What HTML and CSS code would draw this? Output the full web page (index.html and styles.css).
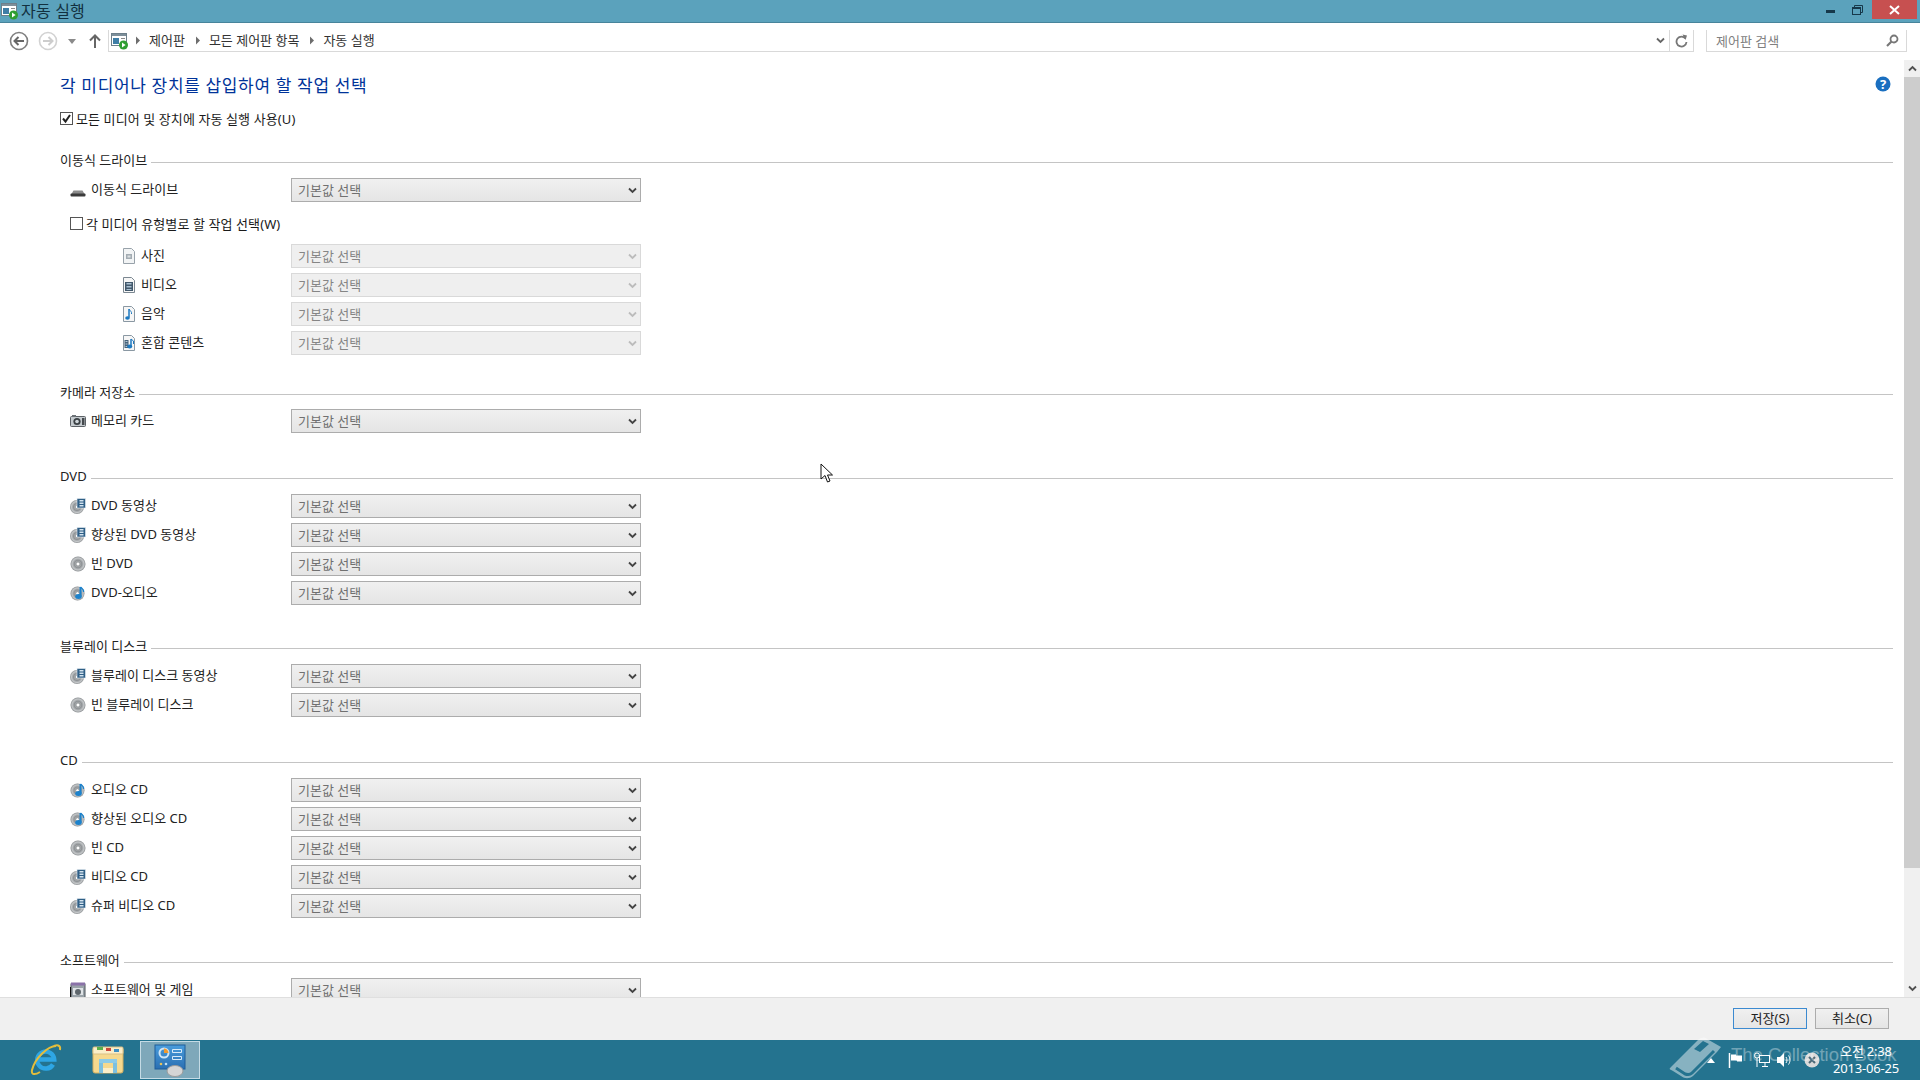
FILE: index.html
```html
<!DOCTYPE html>
<html lang="ko">
<head>
  <meta charset="UTF-8" />
  <title>자동 실행</title>
  <link rel="stylesheet" href="styles.css">
</head>
<body>
  <svg class="defs" width="0" height="0">
    <defs>
      <radialGradient id="discGrad" cx="50%" cy="50%" r="55%">
        <stop offset="0" stop-color="#e4e4e4"/>
        <stop offset="0.45" stop-color="#8e9295"/>
        <stop offset="0.72" stop-color="#c4c7c9"/>
        <stop offset="1" stop-color="#6f7376"/>
      </radialGradient>
      <linearGradient id="cpGrad" x1="0" y1="0" x2="0" y2="1">
        <stop offset="0" stop-color="#4a9ddc"/>
        <stop offset="1" stop-color="#2a6fb2"/>
      </linearGradient>
      <symbol id="i-autoplay" viewBox="0 0 18 18">
        <rect x="0.5" y="1.5" width="15" height="12" fill="#fff" stroke="#6d7f8a"/>
        <rect x="1" y="2" width="14" height="2" fill="#7d8f9a"/>
        <rect x="2" y="6" width="6" height="6" fill="#3f7ea6"/>
        <rect x="10" y="6" width="4" height="1" fill="#888"/>
        <circle cx="12.5" cy="13" r="4.5" fill="#2f9e32"/>
        <path d="M11 10.5l3.6 2.5-3.6 2.5z" fill="#fff"/>
      </symbol>
      <symbol id="i-drive" viewBox="0 0 16 16">
        <path d="M1.5 12l2-3.5h9l2 3.5z" fill="#8c8c8c"/>
        <rect x="0.5" y="11.5" width="15" height="3" rx="1" fill="#3b3b3b"/>
      </symbol>
      <symbol id="i-photo" viewBox="0 0 16 16">
        <path d="M2.5 0.5h8l3 3v12h-11z" fill="#f2f4f5" stroke="#98a2aa"/>
        <rect x="5" y="6" width="6" height="5" fill="#a3acb3"/>
        <rect x="6.5" y="7.5" width="3" height="2" fill="#dde1e4"/>
      </symbol>
      <symbol id="i-video" viewBox="0 0 16 16">
        <path d="M2.5 0.5h8l3 3v12h-11z" fill="#f6f6f6" stroke="#7b8791"/>
        <rect x="4" y="5" width="8" height="9" fill="#42586b"/>
        <path d="M5.5 6h5v1.5h-5zM5.5 9h5v1.5h-5zM5.5 12h5v1h-5z" fill="#a9c0d2"/>
      </symbol>
      <symbol id="i-music" viewBox="0 0 16 16">
        <path d="M2.5 0.5h8l3 3v12h-11z" fill="#f6f6f6" stroke="#8a98a3"/>
        <path d="M8 3v8.5" stroke="#1c79c0" stroke-width="1.5"/>
        <path d="M8 3c1 2 3 2.500 2.500 5" stroke="#1c79c0" fill="none"/>
        <ellipse cx="6.500" cy="12" rx="2.300" ry="1.800" fill="#1c79c0"/>
      </symbol>
      <symbol id="i-mixed" viewBox="0 0 16 16">
        <path d="M2.500 0.500h8l3 3v12h-11z" fill="#f6f6f6" stroke="#8a98a3"/>
        <rect x="3.500" y="5" width="4" height="8" fill="#46627a"/>
        <path d="M4.500 6h2v1h-2zM4.500 8.500h2v1h-2zM4.500 11h2v1h-2z" fill="#b6c8d6"/>
        <path d="M10 4v7" stroke="#1c79c0" stroke-width="1.500"/>
        <ellipse cx="8.700" cy="11.500" rx="2.500" ry="2" fill="#1c79c0"/>
        <path d="M10 4l2.500 2v3" stroke="#1c79c0" fill="none"/>
      </symbol>
      <symbol id="i-camera" viewBox="0 0 16 16">
        <rect x="0.500" y="3.500" width="15" height="10" rx="1" fill="#c4cace" stroke="#5c6166"/>
        <rect x="2" y="2" width="4" height="2" fill="#6d7378"/>
        <circle cx="7" cy="8.500" r="3.600" fill="#3b4145"/>
        <circle cx="7" cy="8.500" r="1.800" fill="#cfd6db"/>
        <rect x="12" y="5" width="2.500" height="7" fill="#44494d"/>
      </symbol>
      <symbol id="i-disc" viewBox="0 0 16 16">
        <circle cx="8" cy="8" r="7.500" fill="url(#discGrad)"/>
        <circle cx="8" cy="8" r="2" fill="#fff" stroke="#7a7e81" stroke-width="0.700"/>
      </symbol>
      <symbol id="i-disc-video" viewBox="0 0 16 16">
        <circle cx="7" cy="9" r="7" fill="url(#discGrad)"/>
        <circle cx="7" cy="9" r="1.800" fill="#fff" stroke="#7a7e81" stroke-width="0.700"/>
        <rect x="7" y="0.500" width="8.500" height="9.500" fill="#2f5f86" stroke="#e8eef3" stroke-width="0.600"/>
        <path d="M9.500 2h4v1.500h-4zM9.500 4.500h4V6h-4zM9.500 7h4v1.500h-4z" fill="#d3e3ef"/>
      </symbol>
      <symbol id="i-disc-audio" viewBox="0 0 16 16">
        <circle cx="7.500" cy="8.500" r="7" fill="url(#discGrad)"/>
        <circle cx="7.500" cy="8.500" r="1.800" fill="#fff" stroke="#7a7e81" stroke-width="0.700"/>
        <path d="M10.500 2v9" stroke="#1c82cc" stroke-width="2"/>
        <ellipse cx="8.500" cy="11.500" rx="3.300" ry="2.500" fill="#1c82cc"/>
        <path d="M10.500 2c1.500 1.500 3.500 2 3 5" stroke="#1c82cc" stroke-width="1.300" fill="none"/>
      </symbol>
      <symbol id="i-software" viewBox="0 0 16 16">
        <rect x="1" y="2" width="14" height="14" fill="#9aa3a9" stroke="#4e555a"/>
        <rect x="1" y="0.500" width="14" height="3" fill="#8a72a8"/>
        <rect x="3" y="6" width="10" height="7" fill="#dfe3e6"/>
        <circle cx="8" cy="10" r="3" fill="#5e666c"/>
        <path d="M0.500 5v11" stroke="#111" stroke-width="1"/>
      </symbol>
      <symbol id="i-chevron" viewBox="0 0 9 7">
        <path d="M1 1.500l3.500 3.500L8 1.500" fill="none" stroke="currentColor" stroke-width="1.800"/>
      </symbol>
      <symbol id="i-crumb" viewBox="0 0 6 9">
        <path d="M1 0.500l4 4-4 4z" fill="#6d6d6d"/>
      </symbol>
    </defs>
  </svg>

  <header class="titlebar">
    <svg class="title-icon"><use href="#i-autoplay"/></svg>
    <span class="title-text">자동 실행</span>
    <div class="window-btns">
      <svg class="win-min" width="9" height="3"><rect width="9" height="3" fill="#16384a"/></svg>
      <svg class="win-restore" width="11" height="10" viewBox="0 0 11 10"><path d="M2.500 2.500v-2h8v7h-2" fill="none" stroke="#16384a"/><rect x="0.500" y="2.500" width="8" height="7" fill="none" stroke="#16384a"/><rect x="0" y="2" width="9" height="2" fill="#16384a"/></svg>
      <div class="win-close">
        <svg width="11" height="10" viewBox="0 0 11 10"><path d="M1 1l9 8M10 1l-9 8" stroke="#fff" stroke-width="2"/></svg>
      </div>
    </div>
  </header>

  <nav class="addressbar">
    <div class="nav-btns">
      <svg class="nav-back" width="20" height="20" viewBox="0 0 20 20"><circle cx="10" cy="10" r="8.500" fill="#fff" stroke="#7f7f7f" stroke-width="1.600"/><path d="M15 10H6M9.500 6l-4 4 4 4" fill="none" stroke="#666" stroke-width="2"/></svg>
      <svg class="nav-forward" width="20" height="20" viewBox="0 0 20 20"><circle cx="10" cy="10" r="8.500" fill="#fff" stroke="#d2d2d2" stroke-width="1.600"/><path d="M5 10h9M10.500 6l4 4-4 4" fill="none" stroke="#cdcdcd" stroke-width="2"/></svg>
      <svg class="nav-drop" width="8" height="5"><path d="M0 0h8L4 5z" fill="#8a8a8a"/></svg>
      <svg class="nav-up" width="12" height="14" viewBox="0 0 12 14"><path d="M6 14V2M1 6.500l5-5 5 5" fill="none" stroke="#666" stroke-width="2"/></svg>
    </div>
    <div class="address-box">
      <svg class="addr-icon"><use href="#i-autoplay"/></svg>
      <svg class="crumb-sep"><use href="#i-crumb"/></svg>
      <span class="crumb">제어판</span>
      <svg class="crumb-sep"><use href="#i-crumb"/></svg>
      <span class="crumb">모든 제어판 항목</span>
      <svg class="crumb-sep"><use href="#i-crumb"/></svg>
      <span class="crumb">자동 실행</span>
      <div class="addr-tools">
        <svg class="addr-chevron"><use href="#i-chevron"/></svg>
        <div class="addr-refresh">
          <svg width="13" height="14" viewBox="0 0 13 14"><path d="M10.500 4.500a5 5 0 1 0 1 3.500" fill="none" stroke="#777" stroke-width="1.800"/><path d="M7.500 0.500l4.500 1-1.500 4.500z" fill="#777"/></svg>
        </div>
      </div>
    </div>
    <div class="search-box">
      <span>제어판 검색</span>
      <svg width="13" height="13" viewBox="0 0 13 13"><circle cx="8" cy="5" r="3.500" fill="none" stroke="#777" stroke-width="1.800"/><path d="M5.500 7.500L1 12" stroke="#777" stroke-width="2.200"/></svg>
    </div>
  </nav>

  <div class="workspace">
    <main class="content">
      <svg class="help" width="16" height="16" viewBox="0 0 16 16"><circle cx="8" cy="8" r="7.500" fill="#1a6fc0"/><text x="8" y="12.500" text-anchor="middle" class="help-mark">?</text></svg>

      <h1>각 미디어나 장치를 삽입하여 할 작업 선택</h1>
      <label class="check-row master">
        <span class="check"><svg width="11" height="11" viewBox="0 0 11 11"><path d="M2 5.500l2.500 3L9 2" fill="none" stroke="#222" stroke-width="2"/></svg></span>
        모든 미디어 및 장치에 자동 실행 사용(U)
      </label>

      <section class="group first">
        <h2 class="group-title"><span>이동식 드라이브</span></h2>
        <div class="row"><div class="name"><svg class="ico"><use href="#i-drive"/></svg>이동식 드라이브</div><div class="combo">기본값 선택<svg><use href="#i-chevron"/></svg></div></div>
        <label class="check-row per-media"><span class="check"></span>각 미디어 유형별로 할 작업 선택(W)</label>
        <div class="row sub"><div class="name"><svg class="ico"><use href="#i-photo"/></svg>사진</div><div class="combo off">기본값 선택<svg><use href="#i-chevron"/></svg></div></div>
        <div class="row sub"><div class="name"><svg class="ico"><use href="#i-video"/></svg>비디오</div><div class="combo off">기본값 선택<svg><use href="#i-chevron"/></svg></div></div>
        <div class="row sub"><div class="name"><svg class="ico"><use href="#i-music"/></svg>음악</div><div class="combo off">기본값 선택<svg><use href="#i-chevron"/></svg></div></div>
        <div class="row sub"><div class="name"><svg class="ico"><use href="#i-mixed"/></svg>혼합 콘텐츠</div><div class="combo off">기본값 선택<svg><use href="#i-chevron"/></svg></div></div>
      </section>

      <section class="group camera">
        <h2 class="group-title"><span>카메라 저장소</span></h2>
        <div class="row"><div class="name"><svg class="ico"><use href="#i-camera"/></svg>메모리 카드</div><div class="combo">기본값 선택<svg><use href="#i-chevron"/></svg></div></div>
      </section>

      <section class="group dvd">
        <h2 class="group-title"><span>DVD</span></h2>
        <div class="row"><div class="name"><svg class="ico"><use href="#i-disc-video"/></svg>DVD 동영상</div><div class="combo">기본값 선택<svg><use href="#i-chevron"/></svg></div></div>
        <div class="row"><div class="name"><svg class="ico"><use href="#i-disc-video"/></svg>향상된 DVD 동영상</div><div class="combo">기본값 선택<svg><use href="#i-chevron"/></svg></div></div>
        <div class="row"><div class="name"><svg class="ico"><use href="#i-disc"/></svg>빈 DVD</div><div class="combo">기본값 선택<svg><use href="#i-chevron"/></svg></div></div>
        <div class="row"><div class="name"><svg class="ico"><use href="#i-disc-audio"/></svg>DVD-오디오</div><div class="combo">기본값 선택<svg><use href="#i-chevron"/></svg></div></div>
      </section>

      <section class="group">
        <h2 class="group-title"><span>블루레이 디스크</span></h2>
        <div class="row"><div class="name"><svg class="ico"><use href="#i-disc-video"/></svg>블루레이 디스크 동영상</div><div class="combo">기본값 선택<svg><use href="#i-chevron"/></svg></div></div>
        <div class="row"><div class="name"><svg class="ico"><use href="#i-disc"/></svg>빈 블루레이 디스크</div><div class="combo">기본값 선택<svg><use href="#i-chevron"/></svg></div></div>
      </section>

      <section class="group cd">
        <h2 class="group-title"><span>CD</span></h2>
        <div class="row"><div class="name"><svg class="ico"><use href="#i-disc-audio"/></svg>오디오 CD</div><div class="combo">기본값 선택<svg><use href="#i-chevron"/></svg></div></div>
        <div class="row"><div class="name"><svg class="ico"><use href="#i-disc-audio"/></svg>향상된 오디오 CD</div><div class="combo">기본값 선택<svg><use href="#i-chevron"/></svg></div></div>
        <div class="row"><div class="name"><svg class="ico"><use href="#i-disc"/></svg>빈 CD</div><div class="combo">기본값 선택<svg><use href="#i-chevron"/></svg></div></div>
        <div class="row"><div class="name"><svg class="ico"><use href="#i-disc-video"/></svg>비디오 CD</div><div class="combo">기본값 선택<svg><use href="#i-chevron"/></svg></div></div>
        <div class="row"><div class="name"><svg class="ico"><use href="#i-disc-video"/></svg>슈퍼 비디오 CD</div><div class="combo">기본값 선택<svg><use href="#i-chevron"/></svg></div></div>
      </section>

      <section class="group software">
        <h2 class="group-title"><span>소프트웨어</span></h2>
        <div class="row"><div class="name"><svg class="ico"><use href="#i-software"/></svg>소프트웨어 및 게임</div><div class="combo">기본값 선택<svg><use href="#i-chevron"/></svg></div></div>
      </section>
    </main>

    <aside class="scrollbar">
      <div class="sb-btn"><svg width="9" height="7"><use href="#i-chevron"/></svg></div>
      <div class="sb-track"><div class="sb-thumb"></div></div>
      <div class="sb-btn"><svg width="9" height="7"><use href="#i-chevron"/></svg></div>
    </aside>
  </div>

  <footer class="actions">
    <button class="btn primary">저장(S)</button>
    <button class="btn">취소(C)</button>
  </footer>

  <div class="taskbar">
    <div class="task">
      <svg width="34" height="34" viewBox="0 0 34 34">
        <path d="M24 21.500a8.500 8.500 0 1 1 1.200-5H10" fill="none" stroke="#2ea6e4" stroke-width="4.500"/>
        <path d="M27 3C19 3 6 15 3 27c-1 5 3 5 8 2M23 4c5-3 9-2 8 3" fill="none" stroke="#e3bd3c" stroke-width="2"/>
      </svg>
    </div>
    <div class="task">
      <svg width="34" height="30" viewBox="0 0 34 30">
        <path d="M2 4h30v22a2 2 0 0 1-2 2H4a2 2 0 0 1-2-2z" fill="#f6d98e" stroke="#cfae62"/>
        <rect x="2" y="2" width="30" height="7" rx="1" fill="#fbeec8" stroke="#d9c085"/>
        <rect x="6" y="2" width="6" height="3" fill="#5bb04a"/>
        <rect x="15" y="3" width="5" height="3" fill="#c9473a"/>
        <rect x="23" y="4" width="5" height="3" fill="#3d8fc4"/>
        <rect x="8" y="14" width="18" height="4" fill="#8ccbe8"/>
        <path d="M8 18h4v10H8zM22 18h4v10h-4z" fill="#7cc0e0"/>
        <rect x="12" y="23" width="10" height="5" fill="#fbeec8"/>
      </svg>
    </div>
    <div class="task active">
      <svg width="34" height="34" viewBox="0 0 34 34">
        <rect x="2" y="2" width="30" height="24" fill="url(#cpGrad)" stroke="#1f5d99"/>
        <circle cx="11" cy="10" r="4.500" fill="none" stroke="#cfe6f7" stroke-width="2"/>
        <path d="M11 5.500a4.500 4.500 0 0 1 4.500 4.500H11z" fill="#f09a2f"/>
        <path d="M19.500 6.500h9v3h-9zM19.500 13.500h9v3h-9z" fill="none" stroke="#d8ebf9"/>
        <circle cx="8" cy="21" r="1.300" fill="#e6c15a"/>
        <circle cx="13" cy="21" r="1.300" fill="#bfe0f5"/>
        <ellipse cx="22" cy="28" rx="8" ry="5.500" fill="#d5d5d5" stroke="#9b9b9b"/>
      </svg>
    </div>

    <div class="tray">
      <svg class="tray-up" width="8" height="5"><path d="M4 0l4 5H0z" fill="#fff"/></svg>
      <svg class="tray-flag" width="15" height="15" viewBox="0 0 15 15"><path d="M1.500 0v15" stroke="#fff" stroke-width="1.500"/><path d="M3 1.500h5v1h6v6H9V7.500H3z" fill="#fff"/></svg>
      <svg class="tray-net" width="17" height="16" viewBox="0 0 17 16"><rect x="6.500" y="3.500" width="10" height="7" fill="none" stroke="#fff"/><circle cx="4" cy="3.500" r="2.500" fill="none" stroke="#fff"/><path d="M4 6v9M9 14.500h6M12 11v3" stroke="#fff"/></svg>
      <svg class="tray-vol" width="16" height="16" viewBox="0 0 16 16"><path d="M1 5h3l4-4v14l-4-4H1z" fill="#fff"/><path d="M10 5c1.300 2 1.300 4 0 6M12.500 3.500c2 3 2 6 0 9" fill="none" stroke="#fff"/></svg>
      <svg class="tray-err" width="16" height="16" viewBox="0 0 16 16"><circle cx="8" cy="8" r="7.500" fill="#d9d9d9"/><path d="M5 5l6 6M11 5l-6 6" stroke="#4c6a78" stroke-width="2"/></svg>
      <div class="clock"><span>오전 2:38</span><span>2013-06-25</span></div>
    </div>
  </div>

  <svg class="watermark-book" width="54" height="42" viewBox="0 0 54 42"><path d="M2 30L30 2c3-2 6-2 8 0l14 8-4 5-24 24c-4 3-8 3-12 0l-8-5c-4-2-4-2-2-4z" fill="#fff"/><path d="M7 31l9 6c3 1 5 1 7-1l22-22" fill="none" stroke="#24738f" stroke-width="3"/><path d="M25 12l9-8 6 3-9 8z" fill="#24738f"/></svg>
  <div class="watermark-text">The Collection Book</div>

  <svg class="cursor" width="13" height="21" viewBox="0 0 13 21"><path d="M1 1v15l4-3.500 2.500 6.500 2.500-1-2.500-6h5z" fill="#fff" stroke="#111"/></svg>
</body>
</html>
```

FILE: styles.css
```css
html, body {
  margin: 0;
  padding: 0;
  height: 1080px;
  overflow: hidden;
}
body {
  width: 1920px;
  display: flex;
  flex-direction: column;
  position: relative;
  background: white;
  color: #1a1a1a;
  font-family: "Noto Sans", "Noto Sans CJK KR", sans-serif;
  font-size: 13px;
}
.defs {
  position: absolute;
}

/* title bar */
.titlebar {
  height: 22px;
  flex: none;
  display: flex;
  align-items: center;
  background: #5ba2bc;
  border-bottom: 1px solid #47849b;
}
.title-icon {
  width: 18px;
  height: 18px;
  margin-left: 1px;
}
.title-text {
  margin-left: 2px;
  padding-bottom: 2px;
  font-size: 16px;
  letter-spacing: 0.2px;
  color: #12303f;
}
.window-btns {
  margin-left: auto;
  height: 100%;
  display: flex;
  align-items: flex-start;
}
.win-min {
  margin: 10px 17px 0 0;
}
.win-restore {
  margin: 5px 9px 0 0;
}
.win-close {
  width: 45px;
  height: 19px;
  margin-right: 3px;
  background: #c75050;
  display: flex;
  align-items: center;
  justify-content: center;
}

/* address bar */
.addressbar {
  height: 37px;
  flex: none;
  display: flex;
  align-items: flex-start;
  padding-top: 7px;
  box-sizing: border-box;
}
.nav-btns {
  width: 108px;
  height: 22px;
  flex: none;
  display: flex;
  align-items: center;
  padding-left: 9px;
  box-sizing: border-box;
}
.nav-forward {
  margin-left: 9px;
}
.nav-drop {
  margin-left: 10px;
}
.nav-up {
  margin-left: 13px;
}
.address-box {
  width: 1586px;
  height: 22px;
  flex: none;
  display: flex;
  align-items: center;
  box-sizing: border-box;
  border-left: 1px solid #d9d9d9;
  border-bottom: 1px solid #d9d9d9;
}
.addr-icon {
  width: 18px;
  height: 18px;
  margin-left: 2px;
}
.crumb-sep {
  width: 6px;
  height: 9px;
  margin: 0 8px 0 6px;
}
.crumb {
  color: #333;
  line-height: 18px;
  padding-bottom: 2px;
}
.crumb + .crumb-sep {
  margin-left: 10px;
}
.addr-tools {
  margin-left: auto;
  height: 100%;
  display: flex;
  align-items: center;
}
.addr-chevron {
  width: 9px;
  height: 7px;
  color: #666;
  margin-right: 4px;
}
.addr-refresh {
  width: 25px;
  height: 100%;
  display: flex;
  align-items: center;
  justify-content: center;
  border-left: 1px solid #d9d9d9;
  border-right: 1px solid #d9d9d9;
  box-sizing: border-box;
}
.search-box {
  width: 201px;
  height: 22px;
  flex: none;
  margin-left: 12px;
  padding: 0 7px 1px 9px;
  display: flex;
  align-items: center;
  justify-content: space-between;
  box-sizing: border-box;
  border: 1px solid #d9d9d9;
  border-top: none;
  color: #808080;
}

/* main area */
.workspace {
  flex: 1;
  min-height: 0;
  display: flex;
}
.content {
  flex: 1;
  min-width: 0;
  overflow: hidden;
  position: relative;
  padding: 13px 11px 0 60px;
}
.help {
  position: absolute;
  top: 16px;
  right: 13px;
}
.help-mark {
  fill: white;
  font-size: 13px;
  font-weight: 700;
}
h1 {
  margin: 0;
  font-size: 17px;
  line-height: 26px;
  font-weight: 400;
  letter-spacing: 0.65px;
  color: #003399;
}
.check-row {
  display: flex;
  align-items: center;
  height: 20px;
  letter-spacing: 0.1px;
}
.check-row.master {
  margin-top: 9px;
}
.check-row.per-media {
  height: 37px;
  margin-left: 10px;
  padding-bottom: 5px;
  box-sizing: border-box;
}
.check {
  width: 13px;
  height: 13px;
  flex: none;
  margin-right: 3px;
  box-sizing: border-box;
  border: 1px solid #555;
  background: white;
  display: flex;
  align-items: center;
  justify-content: center;
}
.group {
  margin-top: 26px;
}
.group.first {
  margin-top: 22px;
}
.group.camera {
  margin-top: 22px;
}
.group.camera .group-title {
  margin-bottom: 7px;
}
.group.dvd {
  margin-top: 28px;
}
.group.cd {
  margin-top: 28px;
}
.group.software {
  margin-top: 27px;
}
.group-title {
  margin: 0 0 8px;
  height: 20px;
  display: flex;
  align-items: center;
  font-size: 13px;
  font-weight: 400;
  line-height: 20px;
  color: #222;
}
.group-title::after {
  content: "";
  flex: 1;
  height: 1px;
  margin: 4px 0 0 4px;
  background: #c4c4c4;
}
.row {
  display: grid;
  grid-template-columns: 231px 350px;
  height: 29px;
}
.name {
  display: flex;
  align-items: center;
  height: 22px;
  margin-top: -1px;
  padding-left: 10px;
  color: #222;
}
.ico {
  width: 16px;
  height: 16px;
  flex: none;
  margin: 4px 5px 0 0;
}
.row.sub .name {
  padding-left: 61px;
}
.row.sub .ico {
  margin-right: 4px;
}
.combo {
  height: 24px;
  display: flex;
  align-items: center;
  justify-content: space-between;
  padding: 0 3px 2px 6px;
  box-sizing: border-box;
  border: 1px solid #acacac;
  background: linear-gradient(#f0f0f0, #e5e5e5);
  color: #707070;
}
.combo svg {
  width: 9px;
  height: 7px;
  margin-top: 2px;
  color: #444;
}
.combo.off {
  border-color: #d9d9d9;
  background: #efefef;
  color: #858585;
}
.combo.off svg {
  color: #bcbcbc;
}

/* scrollbar */
.scrollbar {
  width: 16px;
  flex: none;
  display: flex;
  flex-direction: column;
  background: #f0f0f0;
}
.sb-btn {
  height: 17px;
  flex: none;
  display: flex;
  align-items: center;
  justify-content: center;
  color: #505050;
}
.sb-btn:first-child svg {
  transform: rotate(180deg);
}
.sb-track {
  flex: 1;
}
.sb-thumb {
  height: 791px;
  background: #cdcdcd;
}

/* footer */
.actions {
  height: 43px;
  flex: none;
  display: flex;
  justify-content: flex-end;
  gap: 8px;
  padding: 10px 31px 0 0;
  box-sizing: border-box;
  background: #f0f0f0;
  border-top: 1px solid #dfdfdf;
}
.btn {
  width: 74px;
  height: 21px;
  padding: 0;
  font: inherit;
  line-height: 19px;
  color: #222;
  border: 1px solid #acacac;
  background: linear-gradient(#f0f0f0, #e5e5e5);
}
.btn.primary {
  border: 1px solid #3c8ad0;
}

/* taskbar */
.taskbar {
  height: 40px;
  flex: none;
  display: flex;
  align-items: center;
  padding-left: 16px;
  background: #24738f;
  color: white;
}
.task {
  width: 60px;
  height: 38px;
  margin-right: 2px;
  display: flex;
  align-items: center;
  justify-content: center;
  box-sizing: border-box;
}
.task.active {
  background: #7ea8ba;
  border: 1px solid #c4dbe5;
}
.tray {
  margin-left: auto;
  height: 100%;
  display: flex;
  align-items: center;
}
.tray-up {
  margin-right: 13px;
}
.tray-flag {
  margin-right: 10px;
}
.tray-net {
  margin-right: 6px;
}
.tray-vol {
  margin-right: 12px;
}
.tray-err {
  margin-right: 13px;
}
.clock {
  width: 66px;
  margin-right: 21px;
  display: flex;
  flex-direction: column;
  align-items: center;
  line-height: 17px;
  white-space: nowrap;
  letter-spacing: -0.2px;
}

/* things lying over the page */
.watermark-book {
  position: absolute;
  left: 1669px;
  top: 1037px;
  opacity: 0.45;
}
.watermark-text {
  position: absolute;
  left: 1731px;
  top: 1041px;
  font-family: "Liberation Sans", sans-serif;
  font-size: 18.5px;
  line-height: 28px;
  white-space: nowrap;
  color: white;
  opacity: 0.35;
}
.cursor {
  position: absolute;
  left: 820px;
  top: 463px;
}
```
